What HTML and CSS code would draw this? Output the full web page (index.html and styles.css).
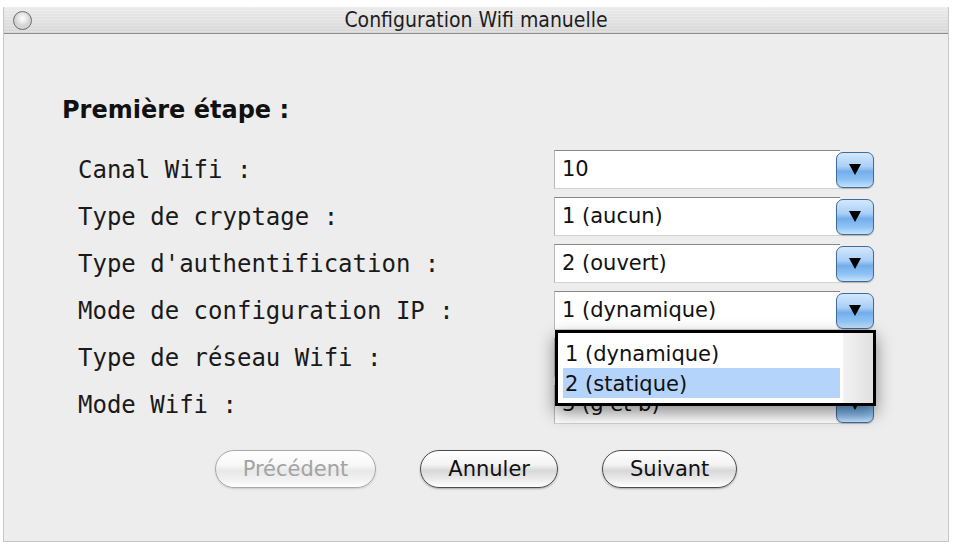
FILE: index.html
```html
<!DOCTYPE html>
<html lang="fr">
<head>
    <meta charset="UTF-8">
    <meta name="viewport" content="width=device-width, initial-scale=1.0">
    <title>Configuration Wifi manuelle</title>
    <link rel="stylesheet" href="styles.css">
</head>
<body>

    <div class="window">
        <div class="titlebar">
            <span class="close-dot"></span>
            <span class="title">Configuration Wifi manuelle</span>
        </div>

        <div class="content">
            <h1 class="step">Première étape :</h1>

            <div class="fields">
                <div class="field-label">Canal Wifi :</div>
                <div class="combo">
                    <span class="combo-value">10</span>
                    <span class="combo-arrow"><svg width="12" height="11" viewBox="0 0 12 11"><polygon points="0,0 12,0 6,11" fill="#000"/></svg></span>
                </div>

                <div class="field-label">Type de cryptage :</div>
                <div class="combo">
                    <span class="combo-value">1 (aucun)</span>
                    <span class="combo-arrow"><svg width="12" height="11" viewBox="0 0 12 11"><polygon points="0,0 12,0 6,11" fill="#000"/></svg></span>
                </div>

                <div class="field-label">Type d'authentification :</div>
                <div class="combo">
                    <span class="combo-value">2 (ouvert)</span>
                    <span class="combo-arrow"><svg width="12" height="11" viewBox="0 0 12 11"><polygon points="0,0 12,0 6,11" fill="#000"/></svg></span>
                </div>

                <div class="field-label">Mode de configuration IP :</div>
                <div class="combo open">
                    <span class="combo-value">1 (dynamique)</span>
                    <span class="combo-arrow"><svg width="12" height="11" viewBox="0 0 12 11"><polygon points="0,0 12,0 6,11" fill="#000"/></svg></span>

                    <!-- open list of the IP mode combo -->
                    <div class="popup">
                        <ul class="popup-list">
                            <li>1 (dynamique)</li>
                            <li class="selected">2 (statique)</li>
                        </ul>
                        <div class="popup-track"></div>
                    </div>
                </div>

                <div class="field-label">Type de réseau Wifi :</div>
                <div class="combo">
                    <span class="combo-value"></span>
                    <span class="combo-arrow"><svg width="12" height="11" viewBox="0 0 12 11"><polygon points="0,0 12,0 6,11" fill="#000"/></svg></span>
                </div>

                <div class="field-label">Mode Wifi :</div>
                <div class="combo">
                    <span class="combo-value">3 (g et b)</span>
                    <span class="combo-arrow"><svg width="12" height="11" viewBox="0 0 12 11"><polygon points="0,0 12,0 6,11" fill="#000"/></svg></span>
                </div>
            </div>

            <div class="actions">
                <button type="button" class="pill" disabled>Précédent</button>
                <button type="button" class="pill">Annuler</button>
                <button type="button" class="pill">Suivant</button>
            </div>
        </div>
    </div>

</body>
</html>
```

FILE: styles.css
```css
body {
    margin: 0;
    padding: 0;
    background-color: #fff;
    font-family: 'DejaVu Sans', sans-serif;
}

.window {
    width: 946px;
    height: 535px;
    margin: 7px 0 0 3px;
    box-sizing: border-box;
    background-color: #ededed;
    border: 1px solid #c6c6c6;
    border-top: none;
    display: flex;
    flex-direction: column;
}

/* title bar */

.titlebar {
    height: 26px;
    border-bottom: 1px solid #8d8d8d;
    background:
        repeating-linear-gradient(to bottom, rgba(255, 255, 255, 0.22) 0, rgba(255, 255, 255, 0.22) 1px, transparent 1px, transparent 3px),
        linear-gradient(#ebebeb, #d7d7d7);
    display: grid;
    grid-template-columns: 1fr auto 1fr;
    align-items: center;
}

.close-dot {
    width: 19px;
    height: 19px;
    margin-left: 9px;
    box-sizing: border-box;
    border-radius: 50%;
    border: 1px solid #6f6f6f;
    background: radial-gradient(circle at 50% 38%, #ffffff 0%, #e2e2e2 40%, #a9a9a9 78%, #7c7c7c 100%);
    box-shadow: inset 0 -2px 3px rgba(255, 255, 255, 0.6);
}

.title {
    font-family: 'DejaVu Sans Condensed', 'DejaVu Sans', sans-serif;
    font-stretch: condensed;
    font-size: 21px;
    line-height: 26px;
    color: #1e1e1e;
}

/* form */

.content {
    padding-top: 61px;
}

.step {
    margin: 0 0 25px 0;
    padding-left: 58px;
    font-size: 24px;
    line-height: 30px;
    font-weight: bold;
    color: #111;
}

.fields {
    margin-left: 74px;
    display: grid;
    grid-template-columns: 476px 322px;
    grid-auto-rows: 39px;
    row-gap: 8px;
}

.field-label {
    font-family: 'DejaVu Sans Mono', monospace;
    font-size: 24px;
    line-height: 39px;
    padding-top: 1px;
    color: #1a1a1a;
    white-space: pre;
}

.combo {
    position: relative;
    display: flex;
    align-items: center;
}

.combo-value {
    flex: 1;
    height: 39px;
    box-sizing: border-box;
    padding-left: 7px;
    background-color: #fff;
    border-top: 1px solid #878787;
    border-left: 1px solid #b9b9b9;
    border-bottom: 1px solid #d2d2d2;
    font-size: 21px;
    line-height: 37px;
    color: #111;
    white-space: nowrap;
    overflow: hidden;
}

.combo-arrow {
    width: 38px;
    height: 36px;
    margin-left: -4px;
    margin-right: 2px;
    box-sizing: border-box;
    border: 1px solid #3f6b9d;
    border-radius: 7px;
    background: linear-gradient(#d4e8fc 0%, #a9cff6 40%, #73aeea 55%, #8fc3f4 80%, #c4e2fc 100%);
    box-shadow: 0 1px 1px rgba(0, 0, 0, 0.25);
    display: flex;
    align-items: center;
    justify-content: center;
}

/* open list under the IP mode combo */

.popup {
    position: absolute;
    top: 39px;
    left: 1px;
    width: 321px;
    height: 76px;
    box-sizing: border-box;
    border: 3px solid #000;
    background-color: #fff;
    display: flex;
    z-index: 2;
    box-shadow: 0 7px 16px rgba(0, 0, 0, 0.45);
}

.popup-list {
    flex: 1;
    margin: 0;
    padding: 5px 3px 5px 5px;
    list-style: none;
}

.popup-list li {
    height: 30px;
    padding-left: 2px;
    font-size: 21px;
    line-height: 33px;
    color: #111;
    white-space: nowrap;
}

.popup-list li.selected {
    background-color: #b5d4fc;
}

.popup-track {
    width: 30px;
    background: linear-gradient(to right, #f3f3f3, #e0e0e0);
}

/* buttons */

.actions {
    margin-top: 26px;
    display: flex;
    justify-content: center;
    gap: 44px;
}

.pill {
    height: 38px;
    padding: 0 27px;
    border: 1px solid #4c4c4c;
    border-radius: 19px;
    background: linear-gradient(#ffffff 0%, #f3f3f3 38%, #d8d8d8 55%, #eeeeee 82%, #ffffff 100%);
    box-shadow: 0 1px 2px rgba(0, 0, 0, 0.3);
    font-family: 'DejaVu Sans', sans-serif;
    font-size: 21px;
    color: #111;
    cursor: pointer;
}

.pill:disabled {
    border-color: #a9a9a9;
    color: #a3a3a3;
    background: linear-gradient(#ffffff 0%, #f7f7f7 40%, #e8e8e8 55%, #f4f4f4 85%, #ffffff 100%);
    box-shadow: 0 1px 2px rgba(0, 0, 0, 0.15);
    cursor: default;
}
```
